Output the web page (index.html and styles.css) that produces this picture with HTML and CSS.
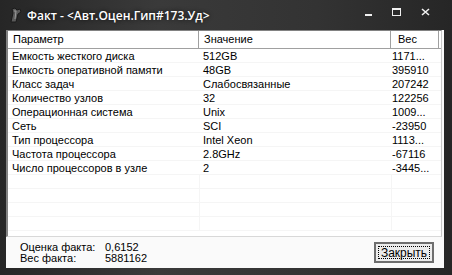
FILE: index.html
```html
<!DOCTYPE html>
<html lang="ru">
<head>
  <meta charset="UTF-8">
  <title>Факт</title>
  <link rel="stylesheet" href="styles.css">
</head>
<body>
  <div class="window">
    <div class="titlebar">
      <svg class="app-icon" width="14" height="16" viewBox="0 0 14 16">
        <path d="M3 15 L5 6 L4 2 L7 1 L9 3 L12 2 L13 5 L10 7 L8 15 Z" fill="#5a5a5a" stroke="#1a1a1a" stroke-width="1"/>
        <path d="M6 4 L8 4 L7 12" fill="none" stroke="#9a9a9a" stroke-width="1"/>
      </svg>
      <span class="title">Факт - &lt;Авт.Оцен.Гип#173.Уд&gt;</span>
      <div class="controls">
        <span class="ctl min"></span>
        <span class="ctl max"></span>
        <svg class="ctl close" width="9" height="8" viewBox="0 0 9 8">
          <path d="M1 1 L8 7 M8 1 L1 7" stroke="#f0f0f0" stroke-width="1.6"/>
        </svg>
      </div>
    </div>

    <div class="client">
      <div class="list">
        <div class="row head">
          <div class="cell">Параметр</div>
          <div class="cell">Значение</div>
          <div class="cell">Вес</div>
        </div>
        <div class="row"><div class="cell">Емкость жесткого диска</div><div class="cell">512GB</div><div class="cell">1171...</div></div>
        <div class="row"><div class="cell">Емкость оперативной памяти</div><div class="cell">48GB</div><div class="cell">395910</div></div>
        <div class="row"><div class="cell">Класс задач</div><div class="cell">Слабосвязанные</div><div class="cell">207242</div></div>
        <div class="row"><div class="cell">Количество узлов</div><div class="cell">32</div><div class="cell">122256</div></div>
        <div class="row"><div class="cell">Операционная система</div><div class="cell">Unix</div><div class="cell">1009...</div></div>
        <div class="row"><div class="cell">Сеть</div><div class="cell">SCI</div><div class="cell">-23950</div></div>
        <div class="row"><div class="cell">Тип процессора</div><div class="cell">Intel Xeon</div><div class="cell">1113...</div></div>
        <div class="row"><div class="cell">Частота процессора</div><div class="cell">2.8GHz</div><div class="cell">-67116</div></div>
        <div class="row"><div class="cell">Число процессоров в узле</div><div class="cell">2</div><div class="cell">-3445...</div></div>
        <div class="row empty"><div class="cell"></div><div class="cell"></div><div class="cell"></div></div>
        <div class="row empty"><div class="cell"></div><div class="cell"></div><div class="cell"></div></div>
        <div class="row empty"><div class="cell"></div><div class="cell"></div><div class="cell"></div></div>
        <div class="row empty"><div class="cell"></div><div class="cell"></div><div class="cell"></div></div>
      </div>

      <div class="footer">
        <div class="stats">
          <span>Оценка факта:</span><span>0,6152</span>
          <span>Вес факта:</span><span>5881162</span>
        </div>
        <button class="btn"><span class="focus">Закрыть</span></button>
      </div>
    </div>
  </div>
</body>
</html>
```

FILE: styles.css
```css
body {
  margin: 0;
  background: #1c1c1c;
  font-family: "Liberation Sans", Arial, sans-serif;
  font-size: 11px;
  color: #000;
}
.window {
  width: 452px;
  height: 275px;
  background: linear-gradient(90deg, #262626 0%, #3a3a3a 35%, #333 70%, #262626 100%);
  box-sizing: border-box;
  padding: 0 8px 7px 6px;
  display: flex;
  flex-direction: column;
}
.titlebar {
  height: 30px;
  display: flex;
  align-items: center;
  padding-left: 2px;
}
.app-icon {
  margin-right: 5px;
}
.title {
  font-family: "Open Sans", "Noto Sans", sans-serif;
  font-weight: 600;
  font-size: 12px;
  color: #fff;
  text-shadow: 0 0 4px rgba(0,0,0,0.8);
}
.controls {
  margin-left: auto;
  display: flex;
  align-items: center;
  gap: 20px;
  padding-right: 14px;
  margin-top: -6px;
}
.ctl.min {
  width: 7px;
  height: 2px;
  background: #f0f0f0;
  margin-top: 6px;
}
.ctl.max {
  width: 7px;
  height: 5px;
  border: 1px solid #f0f0f0;
  border-top-width: 2px;
}
.client {
  flex: 1;
  display: flex;
  flex-direction: column;
  background: #fafafa;
}
.list {
  flex: 1;
  background: #fff;
  border: 1px solid #828282;
  border-right-color: #c8c8c8;
  border-bottom-color: #d8d8d8;
  border-left-width: 2px;
  margin-right: 2px;
  overflow: hidden;
}
.row {
  display: grid;
  grid-template-columns: 191px 192px 48px;
  height: 14px;
  line-height: 14px;
  border-bottom: 1px solid #f5f5f5;
  box-sizing: border-box;
}
.row .cell {
  padding-left: 4px;
  white-space: nowrap;
  overflow: hidden;
}
.row .cell:nth-child(3) {
  padding-left: 1px;
}
.row.empty .cell + .cell {
  border-left: 1px solid #f5f5f5;
}
.row.head {
  height: 18px;
  line-height: 17px;
  border-bottom: 1px solid #a0a0a0;
}
.row.head .cell {
  border-right: 1px solid #a0a0a0;
  padding-left: 5px;
}
.row.head .cell:nth-child(3) {
  padding-left: 7px;
}
.footer {
  height: 31px;
  display: flex;
  align-items: center;
  padding: 0 10px 0 14px;
}
.stats {
  display: grid;
  grid-template-columns: 85px auto;
  line-height: 11px;
  font-size: 11px;
}
.btn {
  margin-left: auto;
  width: 60px;
  height: 21px;
  border: 2px solid #6e6e6e;
  background: #ececec;
  padding: 2px;
  font-family: inherit;
  font-size: 12px;
  display: flex;
}
.btn .focus {
  flex: 1;
  border: 1px dotted #000;
  line-height: 13px;
}
```
